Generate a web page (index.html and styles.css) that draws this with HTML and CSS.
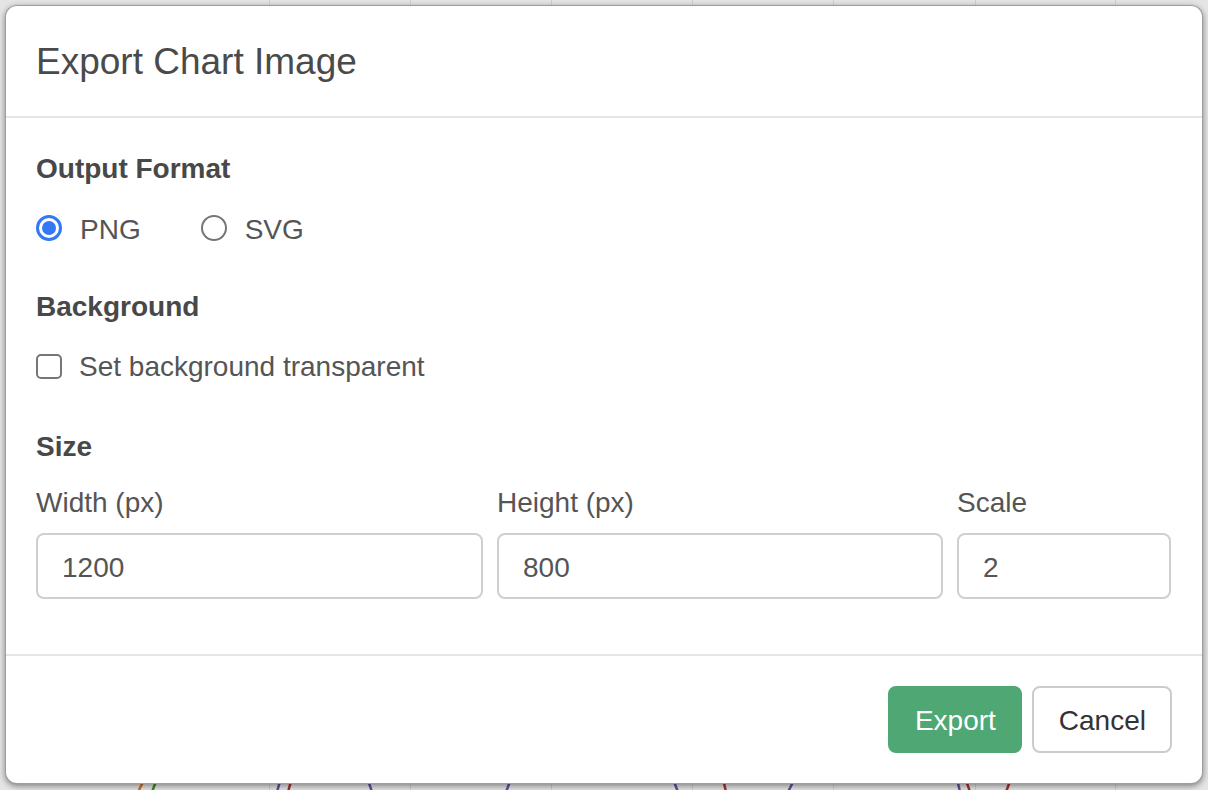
FILE: index.html
```html
<!DOCTYPE html>
<html lang="en">
<head>
<meta charset="utf-8">
<title>Export Chart Image</title>
<link rel="stylesheet" href="styles.css">
</head>
<body>
<svg class="backdrop" width="1208" height="790" viewBox="0 0 1208 790" aria-hidden="true">
  <g stroke="#cfcfcf" stroke-width="1">
    <line x1="269.5" y1="0" x2="269.5" y2="790"/>
    <line x1="410.5" y1="0" x2="410.5" y2="790"/>
    <line x1="551.5" y1="0" x2="551.5" y2="790"/>
    <line x1="692.5" y1="0" x2="692.5" y2="790"/>
    <line x1="833.5" y1="0" x2="833.5" y2="790"/>
    <line x1="975.5" y1="0" x2="975.5" y2="790"/>
    <line x1="1115.5" y1="0" x2="1115.5" y2="790"/>
  </g>
  <g fill="none" stroke-width="2.5">
    <path d="M146 776 L138 792" stroke="#c8742c"/>
    <path d="M158 776 L152 792" stroke="#3f8a2f"/>
    <path d="M282 774 L277 792" stroke="#6a4aa0"/>
    <path d="M293 774 L288 792" stroke="#a8302a"/>
    <path d="M366 774 L372 792" stroke="#6a4aa0"/>
    <path d="M512 776 L506 792" stroke="#6a4aa0"/>
    <path d="M672 776 L678 792" stroke="#6a4aa0"/>
    <path d="M722 774 L726 792" stroke="#a8302a"/>
    <path d="M796 776 L788 792" stroke="#6a4aa0"/>
    <path d="M956 774 L960 792" stroke="#6a4aa0"/>
    <path d="M964 774 L970 792" stroke="#a8302a"/>
    <path d="M1012 776 L1006 792" stroke="#a8302a"/>
  </g>
</svg>

<div class="modal">
  <div class="modal-header">
    <h4 class="modal-title">Export Chart Image</h4>
  </div>
  <div class="modal-body">
    <div class="section-label">Output Format</div>
    <div class="radio-row">
      <label class="choice"><span class="radio checked"></span>PNG</label>
      <label class="choice"><span class="radio"></span>SVG</label>
    </div>

    <div class="section-label gap-lg">Background</div>
    <label class="choice check-row"><span class="checkbox"></span>Set background transparent</label>

    <div class="section-label gap-xl">Size</div>
    <div class="size-grid">
      <div class="field">
        <div class="field-label">Width (px)</div>
        <input class="text-input" type="text" value="1200">
      </div>
      <div class="field">
        <div class="field-label">Height (px)</div>
        <input class="text-input" type="text" value="800">
      </div>
      <div class="field">
        <div class="field-label">Scale</div>
        <input class="text-input" type="text" value="2">
      </div>
    </div>
  </div>
  <div class="modal-footer">
    <button class="btn btn-export" type="button">Export</button>
    <button class="btn btn-cancel" type="button">Cancel</button>
  </div>
</div>
</body>
</html>
```

FILE: styles.css
```css
* {
  box-sizing: border-box;
}

html,
body {
  margin: 0;
  padding: 0;
  width: 1208px;
  height: 790px;
  overflow: hidden;
}

body {
  position: relative;
  background: #e5e5e5;
  font-family: "Liberation Sans", Helvetica, Arial, sans-serif;
  color: #555;
}

.backdrop {
  position: absolute;
  left: 0;
  top: 0;
  z-index: 0;
}

.modal {
  position: relative;
  z-index: 1;
  margin: 5px 5px 0 5px;
  background: #fff;
  border: 1px solid rgba(0, 0, 0, 0.38);
  border-radius: 12px;
  box-shadow: 0 2px 6px rgba(0, 0, 0, 0.45);
}

.modal-header {
  padding: 30px 30px 28px 30px;
  border-bottom: 2px solid #e5e5e5;
}

.modal-title {
  margin: 0;
  font-size: 37px;
  line-height: 52px;
  font-weight: normal;
  color: #4a4a4a;
}

.modal-body {
  padding: 31px 30px 55px 30px;
}

.section-label {
  font-size: 28px;
  line-height: 40px;
  font-weight: bold;
  color: #484848;
}

.gap-lg {
  margin-top: 37px;
}

.gap-xl {
  margin-top: 40px;
}

.radio-row {
  display: flex;
  gap: 60px;
  margin-top: 21px;
}

.choice {
  display: flex;
  align-items: center;
  gap: 18px;
  font-size: 28px;
  line-height: 40px;
  color: #555;
}

.check-row {
  margin-top: 20px;
  gap: 17px;
}

.radio {
  width: 26px;
  height: 26px;
  border-radius: 50%;
  border: 2px solid #767676;
  background: #fff;
  flex: none;
  position: relative;
  top: -2px;
}

.radio.checked {
  border: 3px solid #3478f6;
}

.radio.checked::after {
  content: "";
  position: absolute;
  left: 3px;
  top: 3px;
  width: 14px;
  height: 14px;
  border-radius: 50%;
  background: #3478f6;
}

.checkbox {
  width: 26px;
  height: 25px;
  border: 2px solid #767676;
  border-radius: 5px;
  background: #fff;
  flex: none;
  position: relative;
  top: -1px;
}

.size-grid {
  display: grid;
  grid-template-columns: 447px 446px 214px;
  column-gap: 14px;
  margin-top: 16px;
}

.field-label {
  font-size: 28px;
  line-height: 40px;
  color: #555;
}

.text-input {
  display: block;
  width: 100%;
  height: 66px;
  margin-top: 10px;
  padding: 3px 24px 0 24px;
  border: 2px solid #cfcfcf;
  border-radius: 8px;
  font-family: inherit;
  font-size: 28px;
  color: #555;
  background: #fff;
  outline: none;
}

.modal-footer {
  display: flex;
  justify-content: flex-end;
  gap: 10px;
  padding: 30px 30px 30px 30px;
  border-top: 2px solid #e5e5e5;
}

.btn {
  height: 67px;
  padding: 2px 24px 0 25px;
  border-radius: 8px;
  font-family: inherit;
  font-size: 28px;
  line-height: 40px;
  cursor: pointer;
}

.btn-export {
  background: #4fa773;
  border: 2px solid #4fa773;
  color: #fff;
}

.btn-cancel {
  background: #fff;
  border: 2px solid #cccccc;
  color: #333;
}
```
